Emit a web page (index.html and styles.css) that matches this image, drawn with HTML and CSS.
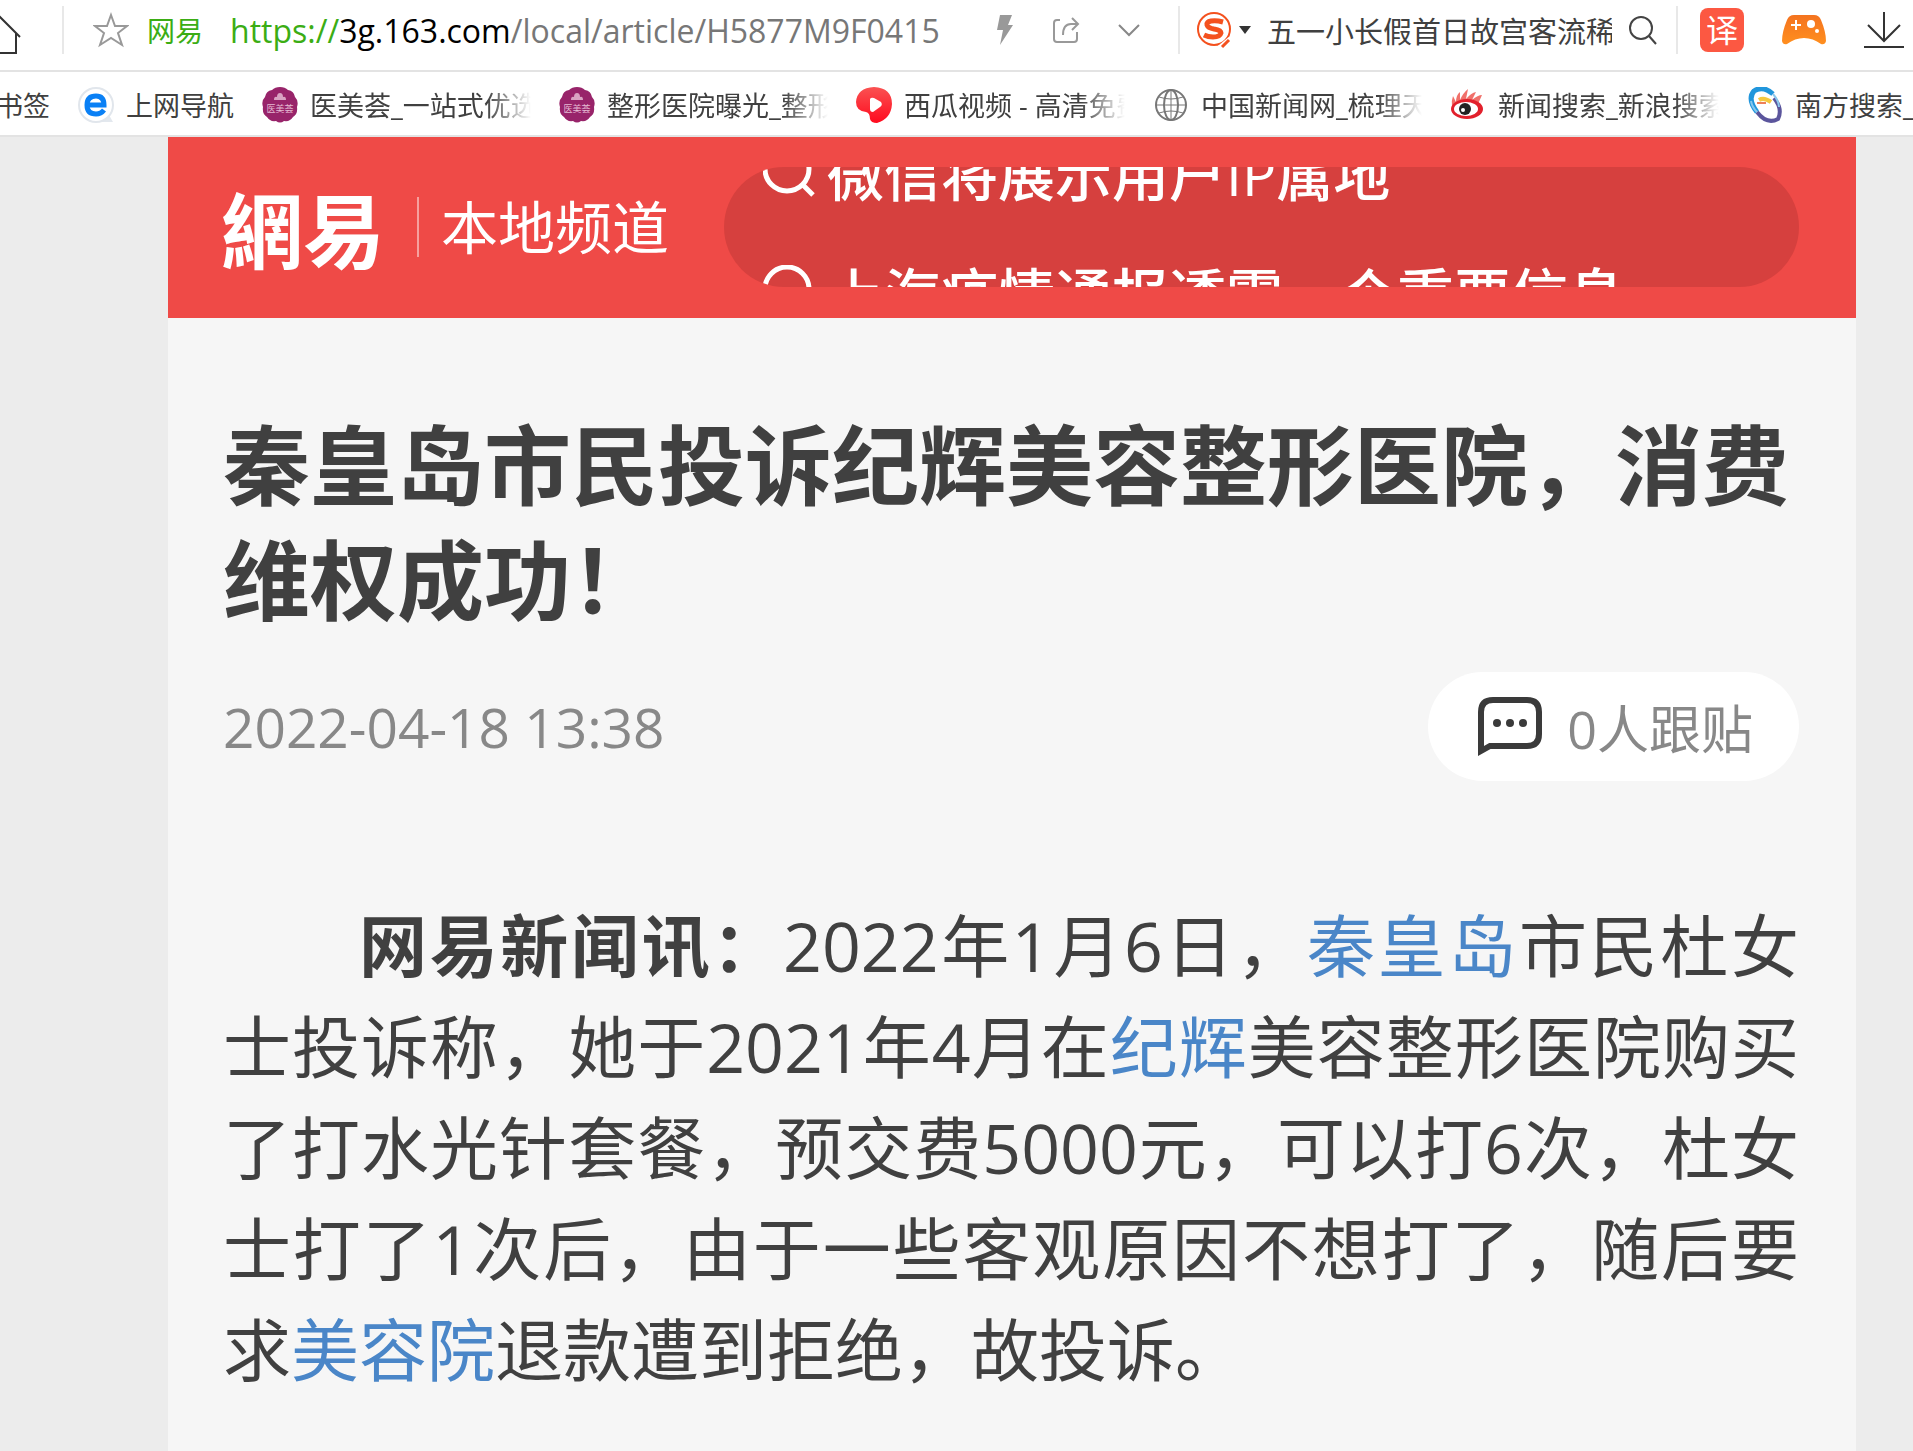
FILE: index.html
```
<!DOCTYPE html>
<html lang="zh-CN">
<head>
  <meta charset="utf-8">
  <meta name="viewport" content="width=device-width, initial-scale=1">
  <title>秦皇岛市民投诉纪辉美容整形医院，消费维权成功！</title>
  <link rel="stylesheet" href="styles.css">
</head>
<body>
  <div class="toolbar">
    <button class="icon-btn home" aria-label="主页">
      <svg width="22" height="48" viewBox="0 0 22 48" fill="none" stroke="#333" stroke-width="2"><path d="M-2 9L20 31M16 27V47H-2"/></svg>
    </button>
    <span class="divider"></span>
    <button class="icon-btn star" aria-label="收藏">
      <svg width="36" height="36" viewBox="0 0 36 36" fill="none" stroke="#999" stroke-width="2"><path d="M18 3L22 14L34 14L25 21L29 33L18 26L7 33L11 21L2 14L14 14Z"/></svg>
    </button>
    <span class="site-name">网易</span>
    <div class="address" role="textbox" aria-label="地址栏" contenteditable="true" spellcheck="false"><span class="scheme">https://</span><span class="host">3g.163.com</span>/local/article/H5877M9F0415</div>
    <div class="address-tools">
      <button class="icon-btn" aria-label="极速模式">
        <svg width="18" height="32" viewBox="0 0 18 32" fill="#999"><path d="M4 1H16L12 11H17L4 31L7 16H1Z"/></svg>
      </button>
      <button class="icon-btn" aria-label="分享">
        <svg width="28" height="30" viewBox="0 0 28 30" fill="none" stroke="#999" stroke-width="2"><path d="M8 5H5Q2 5 2 8V24Q2 27 5 27H22Q25 27 25 24V17"/><path d="M11 20Q11 9 19 9H25M20 3L26 9L20 15"/></svg>
      </button>
      <button class="icon-btn" aria-label="展开">
        <svg width="22" height="14" viewBox="0 0 22 14" fill="none" stroke="#888" stroke-width="2"><path d="M1 2L11 12L21 2"/></svg>
      </button>
    </div>
    <span class="divider"></span>
    <form class="search">
      <button type="button" class="icon-btn engine" aria-label="搜索引擎">
        <svg width="36" height="38" viewBox="0 0 36 38"><circle cx="18" cy="18" r="16" fill="none" stroke="#f4511e" stroke-width="2"/><path d="M27 11Q20 9 15 10Q10 11 11 14Q12 17 18 18Q25 19 25 22Q24 26 17 26Q12 26 8 24" fill="none" stroke="#f4511e" stroke-width="5"/><path d="M23 36L34 27" stroke="#fff" stroke-width="3"/><path d="M26 36L33 29" stroke="#f4511e" stroke-width="3"/></svg>
        <svg width="12" height="8" viewBox="0 0 12 8" fill="#333"><path d="M0 0H12L6 8Z"/></svg>
      </button>
      <input class="search-input" type="text" aria-label="搜索" value="五一小长假首日故宫客流稀少">
      <button type="button" class="icon-btn" aria-label="搜索">
        <svg width="30" height="30" viewBox="0 0 30 30" fill="none" stroke="#444" stroke-width="2"><circle cx="13" cy="13" r="11"/><path d="M21 21L28 29"/></svg>
      </button>
    </form>
    <span class="divider"></span>
    <div class="extensions">
      <button class="icon-btn translate">译</button>
      <button class="icon-btn" aria-label="游戏">
        <svg width="44" height="32" viewBox="0 0 44 32"><defs><linearGradient id="pad" x1="0" y1="0" x2="0" y2="1"><stop offset="0" stop-color="#f4731f"/><stop offset="1" stop-color="#ff8f1f"/></linearGradient></defs><path d="M12 1H32Q37 1 39 6Q44 18 44 27Q43 31 39 30Q31 24 22 24Q13 24 5 30Q1 31 0 27Q0 18 5 6Q7 1 12 1Z" fill="url(#pad)"/><path d="M14 6V16M9 11H19" stroke="#fff" stroke-width="2"/><circle cx="29" cy="10" r="4" fill="#fff"/><circle cx="35" cy="17" r="2" fill="#fff"/></svg>
      </button>
      <button class="icon-btn" aria-label="下载">
        <svg width="40" height="38" viewBox="0 0 40 38" fill="none" stroke="#333" stroke-width="2"><path d="M20 1V30M4 14L20 30L36 14M0 36H40"/></svg>
      </button>
    </div>
  </div>

  <nav class="bookmarks">
    <a class="bookmark" href="#">书签</a>
    <a class="bookmark" href="#">
      <svg class="favicon" viewBox="0 0 36 36"><path d="M18 1A17 17 0 1 1 18 35H35L31 28" fill="#e3e8ee"/><circle cx="18" cy="18" r="17" fill="#fff" stroke="#e1e6ec" stroke-width="2"/><path d="M9 18H26Q26 9 18 9Q9 9 9 18Q9 27 18 27Q23 27 26 23" fill="none" stroke="#0a80f5" stroke-width="5"/></svg>
      上网导航
    </a>
    <a class="bookmark" href="#">
      <svg class="favicon" viewBox="0 0 36 36"><path d="M18 0Q23 0 26 3Q32 4 33 10Q37 14 35 20Q36 27 31 30Q28 35 22 34Q18 37 14 34Q8 35 5 30Q0 27 1 20Q-1 14 3 10Q4 4 10 3Q13 0 18 0Z" fill="#98246a"/><path d="M12 13Q12 9 15 10Q15 6 18 6Q21 6 21 10Q24 9 24 13Z" fill="#d9a3c2"/><text x="18" y="25" text-anchor="middle" class="seal">医美荟</text></svg>
      <span class="fade">医美荟_一站式优选</span>
    </a>
    <a class="bookmark" href="#">
      <svg class="favicon" viewBox="0 0 36 36"><path d="M18 0Q23 0 26 3Q32 4 33 10Q37 14 35 20Q36 27 31 30Q28 35 22 34Q18 37 14 34Q8 35 5 30Q0 27 1 20Q-1 14 3 10Q4 4 10 3Q13 0 18 0Z" fill="#98246a"/><path d="M12 13Q12 9 15 10Q15 6 18 6Q21 6 21 10Q24 9 24 13Z" fill="#d9a3c2"/><text x="18" y="25" text-anchor="middle" class="seal">医美荟</text></svg>
      <span class="fade">整形医院曝光_整形</span>
    </a>
    <a class="bookmark" href="#">
      <svg class="favicon" viewBox="0 0 36 36"><defs><linearGradient id="melon" x1="0" y1="0" x2="0" y2="1"><stop offset="0" stop-color="#fa5252"/><stop offset="1" stop-color="#ff0a1e"/></linearGradient></defs><path d="M18 0Q36 1 36 17Q35 32 21 36Q15 36 14 32Q14 26 10 25Q0 24 0 15Q1 1 18 0Z" fill="url(#melon)"/><path d="M14 12Q15 10 18 11L25 15Q27 18 24 20L17 25Q14 25 14 22Z" fill="#fff"/></svg>
      <span class="fade">西瓜视频 - 高清免费</span>
    </a>
    <a class="bookmark" href="#">
      <svg class="favicon" viewBox="0 0 36 36" fill="none" stroke="#777" stroke-width="2"><circle cx="18" cy="18" r="15"/><ellipse cx="18" cy="18" rx="7" ry="15"/><path d="M18 3V33M3 18H33M6 10Q18 14 30 10M6 26Q18 22 30 26" stroke-width="1"/></svg>
      <span class="fade">中国新闻网_梳理天</span>
    </a>
    <a class="bookmark" href="#">
      <svg class="favicon" viewBox="0 0 36 36"><path d="M2 20Q1 14 3 9L6 15Q6 8 10 5L10 13Q13 6 18 2L16 12Q21 6 26 5L22 13Q28 8 32 8L28 17Z" fill="#f0706a"/><ellipse cx="17" cy="22" rx="16" ry="10" fill="#e2202c"/><ellipse cx="16" cy="22" rx="12" ry="7" fill="#fff"/><circle cx="15" cy="22" r="6" fill="#222"/><circle cx="13" cy="23" r="2" fill="#fff"/></svg>
      <span class="fade">新闻搜索_新浪搜索</span>
    </a>
    <a class="bookmark" href="#">
      <svg class="favicon" viewBox="0 0 36 36" fill="none"><path d="M26 7Q16 -2 7 4Q0 12 10 25" stroke="#2196dc" stroke-width="5"/><path d="M10 25Q20 38 31 32Q36 22 27 11" stroke="#5b559c" stroke-width="4"/><path d="M26 7Q32 14 32 20M10 25Q5 20 4 14" stroke="#8ac8ee" stroke-width="2"/><path d="M12 13Q17 10 24 15" stroke="#f5c93f" stroke-width="4"/><path d="M10 16H19" stroke="#ee7f58" stroke-width="2"/></svg>
      <span class="fade last">南方搜索_南方</span>
    </a>
  </nav>

  <div class="page">
    <header class="site-header">
      <a class="logo" href="#">網易</a>
      <a class="channel" href="#">本地频道</a>
      <div class="hot-search">
        <ul class="hot-list">
          <li class="hot-item">
            <svg class="hot-icon" viewBox="0 0 52 52"><circle cx="24" cy="24" r="22"/><path d="M40 40L50 50"/></svg>
            <a href="#">微信将展示用户IP属地</a>
          </li>
          <li class="hot-item">
            <svg class="hot-icon" viewBox="0 0 52 52"><circle cx="24" cy="24" r="22"/><path d="M40 40L50 50"/></svg>
            <a href="#">上海疫情通报透露一个重要信息</a>
          </li>
        </ul>
      </div>
    </header>

    <article class="article">
      <h1 class="title">秦皇岛市民投诉纪辉美容整形医院，消费维权成功！</h1>
      <div class="info">
        <time class="date" datetime="2022-04-18T13:38">2022-04-18 13:38</time>
        <button class="comments">
          <svg width="64" height="60" viewBox="0 0 64 60"><path d="M3 54V15Q3 3 15 3H49Q61 3 61 15V37Q61 49 49 49H12Z" fill="none" stroke="#3a3a3a" stroke-width="6"/><g fill="#3a3a3a"><circle cx="19" cy="26" r="4"/><circle cx="32" cy="26" r="4"/><circle cx="45" cy="26" r="4"/></g></svg>
          0人跟贴
        </button>
      </div>
      <p class="text"><strong>网易新闻讯：</strong>2022年1月6日，<a href="#">秦皇岛</a>市民杜女士投诉称，她于2021年4月在<a href="#">纪辉</a>美容整形医院购买了打水光针套餐，预交费5000元，可以打6次，杜女士打了1次后，由于一些客观原因不想打了，随后要求<a href="#">美容院</a>退款遭到拒绝，故投诉。</p>
    </article>
  </div>
</body>
</html>
```
FILE: styles.css
```
* {
  box-sizing: border-box;
}

body {
  margin: 0;
  min-height: 100vh;
  display: flex;
  flex-direction: column;
  font-family: "Open Sans", "Noto Sans CJK SC", sans-serif;
  background-color: #ececec;
  color: #404040;
  overflow-x: hidden;
}

a {
  color: inherit;
  text-decoration: none;
}

button {
  font-family: inherit;
  border: none;
  background: none;
  padding: 0;
  cursor: pointer;
}

svg {
  display: block;
  flex: none;
}

/* browser toolbar */
.toolbar {
  display: flex;
  align-items: center;
  height: 72px;
  padding-bottom: 10px;
  background-color: #fff;
  border-bottom: 2px solid #e3e3e3;
  white-space: nowrap;
}

.icon-btn {
  display: flex;
  align-items: center;
  flex: none;
}

.home {
  margin-right: 40px;
}

.divider {
  flex: none;
  width: 2px;
  height: 48px;
  background-color: #e8e8e8;
}

.star {
  margin-left: 29px;
}

.site-name {
  margin: 0 27px 0 18px;
  font-size: 28px;
  color: #3bad14;
}

.address {
  flex: 1;
  min-width: 0;
  overflow: hidden;
  font-size: 32px;
  color: #777;
  outline: none;
}

.scheme {
  color: #3bad14;
}

.host {
  color: #000;
}

.address-tools {
  display: flex;
  align-items: center;
  gap: 38px;
  margin: 0 38px;
}

.search {
  display: flex;
  align-items: center;
  margin: 0 18px 0 16px;
}

.engine {
  gap: 7px;
}

.search-input {
  width: 345px;
  margin: 0 16px;
  padding: 0;
  border: none;
  outline: none;
  background: none;
  font-family: inherit;
  font-size: 29px;
  color: #404040;
}

.extensions {
  display: flex;
  align-items: center;
  gap: 38px;
  margin: 0 9px 0 22px;
}

.translate {
  justify-content: center;
  width: 44px;
  height: 44px;
  border-radius: 8px;
  background-color: #fc5842;
  color: #fff;
  font-size: 32px;
  line-height: 44px;
}

/* bookmarks bar, scrolled a little to the left */
.bookmarks {
  display: flex;
  align-items: center;
  gap: 28px;
  height: 65px;
  margin-left: -4px;
  padding-top: 2px;
  background-color: #fff;
  border-bottom: 2px solid #e3e3e3;
  overflow: hidden;
  white-space: nowrap;
  font-size: 27px;
}

.bookmark {
  display: flex;
  align-items: center;
  flex: none;
  gap: 12px;
}

.favicon {
  width: 36px;
  height: 36px;
}

.seal {
  font-size: 9px;
  fill: #e5b9d2;
}

.fade {
  width: 221px;
  overflow: hidden;
  -webkit-mask-image: linear-gradient(to right, #000 80%, transparent);
  mask-image: linear-gradient(to right, #000 80%, transparent);
}

.last {
  -webkit-mask-image: none;
  mask-image: none;
}

/* page */
.page {
  flex: 1;
  margin: 0 57px 0 168px;
  background-color: #f6f6f6;
}

.site-header {
  display: flex;
  align-items: center;
  height: 181px;
  padding: 0 57px 1px 53px;
  background-color: #ef4a47;
  color: #fff;
}

.logo {
  font-family: "Noto Sans CJK TC", sans-serif;
  font-size: 82px;
  font-weight: bold;
  line-height: 84px;
}

.channel {
  margin: 0 55px 0 32px;
  padding-left: 22px;
  border-left: 2px solid #f6a09e;
  font-size: 57px;
  line-height: 60px;
  white-space: nowrap;
}

.hot-search {
  flex: 1;
  min-width: 0;
  height: 120px;
  border-radius: 60px;
  background-color: #d6403e;
  overflow: hidden;
}

/* ticker is caught halfway between two entries */
.hot-list {
  margin: -56px 0 0;
  padding: 0 0 0 39px;
  list-style: none;
}

.hot-item {
  display: flex;
  align-items: center;
  gap: 12px;
  height: 120px;
  font-size: 57px;
  font-weight: 500;
  white-space: nowrap;
}

.hot-icon {
  width: 52px;
  height: 52px;
  fill: none;
  stroke: #fff;
  stroke-width: 5;
}

.article {
  padding: 90px 57px 0 55px;
}

.title {
  margin: 0 0 34px;
  font-size: 87px;
  line-height: 115px;
}

.info {
  display: flex;
  align-items: center;
  justify-content: space-between;
  margin-bottom: 114px;
  color: #888;
}

.date {
  font-size: 55px;
}

.comments {
  display: flex;
  align-items: center;
  gap: 25px;
  height: 109px;
  padding: 0 46px 0 50px;
  border-radius: 55px;
  background-color: #fff;
  color: #888;
  font-size: 52px;
}

.text {
  margin: 0;
  font-size: 68px;
  line-height: 101px;
  text-indent: 2em;
  text-align: justify;
}

.text a {
  color: #4a86c8;
}
```
